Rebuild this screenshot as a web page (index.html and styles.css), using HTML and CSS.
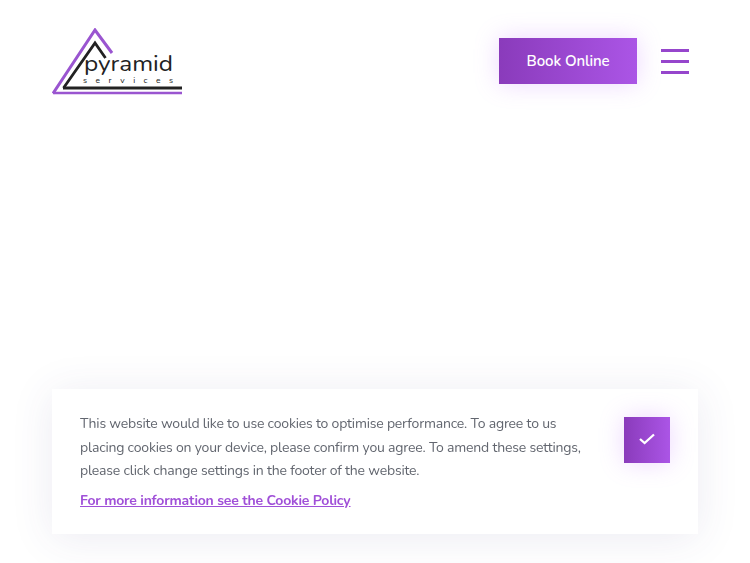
FILE: index.html
```html
<!DOCTYPE html>
<html lang="en">

<head>
  <meta charset="UTF-8">
  <meta name="viewport" content="width=device-width, initial-scale=1.0">
  <title>Pyramid Services</title>
  <link rel="stylesheet" href="styles.css">
</head>

<body>
  <header class="header">
    <a class="logo" href="#">
      <svg width="131" height="67" viewBox="0 0 131 67">
        <path d="M1 65.5 L43 2 L60 25" class="logo-purple" />
        <path d="M11.5 60 L43 15 L53.5 30" class="logo-dark" />
        <path d="M1 65 H130" class="logo-purple-thin" />
        <path d="M11 60 H130" class="logo-dark" />
        <text x="32" y="43" textLength="89" lengthAdjust="spacingAndGlyphs" class="logo-name">pyramid</text>
        <text x="31" y="55" textLength="90" class="logo-sub">services</text>
      </svg>
    </a>
    <div class="header-right">
      <a class="book-btn" href="#">Book Online</a>
      <button class="burger" aria-label="Menu">
        <span></span>
        <span></span>
        <span></span>
      </button>
    </div>
  </header>

  <div class="cookie-bar">
    <div class="cookie-text">
      <p>This website would like to use cookies to optimise performance. To agree to us placing cookies on your device, please confirm you agree. To amend these settings, please click change settings in the footer of the website.</p>
      <a href="#">For more information see the Cookie Policy</a>
    </div>
    <button class="cookie-ok" aria-label="Agree">
      <svg width="16" height="12" viewBox="0 0 16 12">
        <path d="M1 6 L5.6 10 L15 1.5" />
      </svg>
    </button>
  </div>
</body>

</html>
```

FILE: styles.css
```css
body {
  font-family: 'Nunito', 'Noto Sans', sans-serif;
  margin: 0;
  background: #ffffff;
  height: 563px;
  overflow: hidden;
}

.header {
  display: flex;
  justify-content: space-between;
  align-items: flex-start;
  padding: 28px 61px 0 52px;
}

.logo {
  display: block;
  height: 67px;
}

.logo svg {
  display: block;
}

.logo-purple,
.logo-purple-thin,
.logo-dark {
  fill: none;
}

.logo-purple {
  stroke: #9a55d0;
  stroke-width: 3;
}

.logo-purple-thin {
  stroke: #9a55d0;
  stroke-width: 2.4;
}

.logo-dark {
  stroke: #222222;
  stroke-width: 2.8;
}

.logo-name {
  font-size: 21px;
  font-weight: 400;
  fill: #222222;
}

.logo-sub {
  font-size: 8.5px;
  fill: #222222;
}

.header-right {
  display: flex;
  align-items: center;
  gap: 24px;
  margin-top: 10px;
}

.book-btn {
  display: block;
  width: 138px;
  height: 46px;
  line-height: 46px;
  text-align: center;
  color: #ffffff;
  font-size: 15px;
  font-weight: 600;
  letter-spacing: -0.1px;
  text-decoration: none;
  background: linear-gradient(90deg, #8a3bbb, #ab55e6);
  box-shadow: 0 0 24px rgba(190, 110, 255, 0.28);
}

.burger {
  display: flex;
  flex-direction: column;
  justify-content: space-between;
  width: 28px;
  height: 25px;
  padding: 0;
  border: none;
  background: none;
}

.burger span {
  display: block;
  height: 3px;
  background: #9646cc;
}

.cookie-bar {
  position: fixed;
  left: 52px;
  right: 52px;
  bottom: 29px;
  height: 145px;
  box-sizing: border-box;
  display: flex;
  justify-content: space-between;
  align-items: flex-start;
  padding: 23px 28px 0;
  background: #ffffff;
  box-shadow: 0 4px 40px rgba(70, 60, 130, 0.1);
}

.cookie-text {
  width: 505px;
  color: #62666f;
  font-size: 14px;
  letter-spacing: -0.2px;
}

.cookie-text p {
  margin: 0 0 6px;
  line-height: 23.5px;
}

.cookie-text a {
  color: #a050d8;
  font-weight: 700;
  line-height: 24px;
}

.cookie-ok {
  width: 46px;
  height: 46px;
  margin-top: 5px;
  padding: 0 0 3px;
  border: none;
  display: flex;
  align-items: center;
  justify-content: center;
  background: linear-gradient(90deg, #8a3bbb, #ab55e6);
  box-shadow: 0 0 24px rgba(190, 110, 255, 0.28);
}

.cookie-ok svg path {
  fill: none;
  stroke: #ffffff;
  stroke-width: 2.3;
}
```
